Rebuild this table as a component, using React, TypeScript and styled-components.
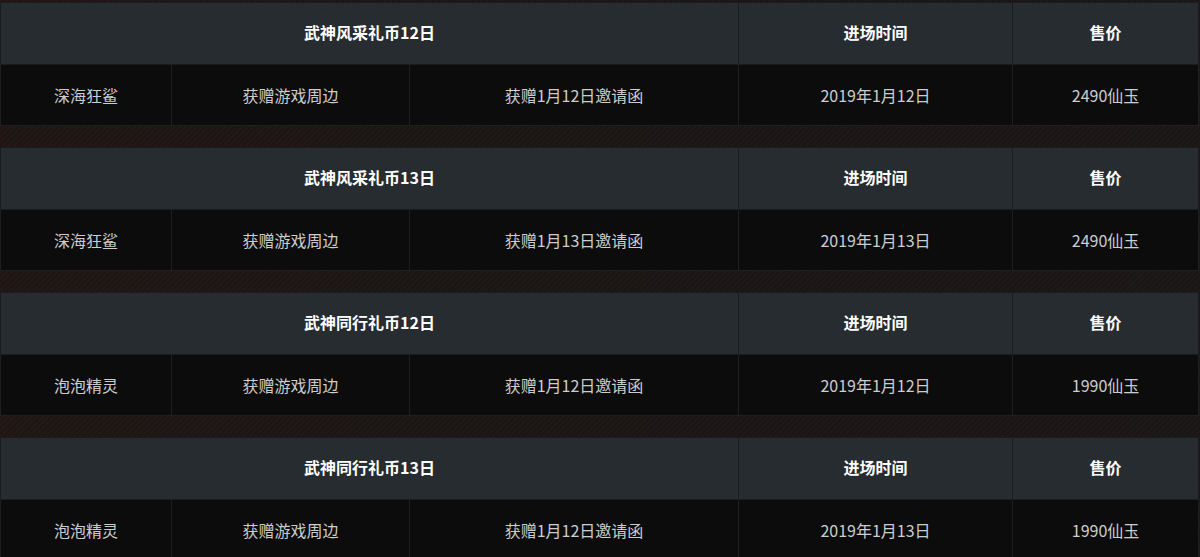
import React from "react";
import styled, { createGlobalStyle } from "styled-components";

type Ticket = {
  title: string;
  pet: string;
  gift: string;
  invite: string;
  date: string;
  price: string;
};

const tickets: Ticket[] = [
  { title: "武神风采礼币12日", pet: "深海狂鲨", gift: "获赠游戏周边", invite: "获赠1月12日邀请函", date: "2019年1月12日", price: "2490仙玉" },
  { title: "武神风采礼币13日", pet: "深海狂鲨", gift: "获赠游戏周边", invite: "获赠1月13日邀请函", date: "2019年1月13日", price: "2490仙玉" },
  { title: "武神同行礼币12日", pet: "泡泡精灵", gift: "获赠游戏周边", invite: "获赠1月12日邀请函", date: "2019年1月12日", price: "1990仙玉" },
  { title: "武神同行礼币13日", pet: "泡泡精灵", gift: "获赠游戏周边", invite: "获赠1月12日邀请函", date: "2019年1月13日", price: "1990仙玉" },
];

const GlobalStyle = createGlobalStyle`
  html, body {
    margin: 0;
    height: 100%;
  }
  body {
    font-family: "Noto Sans CJK SC", "Noto Sans", sans-serif;
    background-color: #1b1615;
    background-image:
      repeating-linear-gradient(135deg, rgba(255,255,255,0.01) 0 2px, rgba(0,0,0,0.03) 2px 4px),
      linear-gradient(90deg, #201714 0%, #1c1615 30%, #1b1716 100%);
    overflow: hidden;
  }
`;

const Page = styled.div`
  display: flex;
  flex-direction: column;
  gap: 21px;
  padding-top: 2px;
  width: 1198px;
`;

const Table = styled.table`
  width: 1198px;
  border-collapse: collapse;
  table-layout: fixed;
  border: 1px solid #1e1f21;
`;

const HeadCell = styled.th`
  height: 57px;
  padding: 0 0 4px;
  background: #272c31;
  color: #ffffff;
  font-size: 16px;
  font-weight: 700;
  text-align: center;
  border: 1px solid #1a1c1e;
`;

const Cell = styled.td`
  height: 60px;
  padding: 0;
  background: #0c0c0c;
  color: #cdcdcd;
  font-size: 16px;
  text-align: center;
  border: 1px solid #1f1f1f;
`;

const TicketTable = ({ t }: { t: Ticket }) => (
  <Table>
    <colgroup>
      <col style={{ width: 171 }} />
      <col style={{ width: 238 }} />
      <col style={{ width: 329 }} />
      <col style={{ width: 274 }} />
      <col style={{ width: 186 }} />
    </colgroup>
    <thead>
      <tr>
        <HeadCell colSpan={3}>{t.title}</HeadCell>
        <HeadCell>进场时间</HeadCell>
        <HeadCell>售价</HeadCell>
      </tr>
    </thead>
    <tbody>
      <tr>
        <Cell>{t.pet}</Cell>
        <Cell>{t.gift}</Cell>
        <Cell>{t.invite}</Cell>
        <Cell>{t.date}</Cell>
        <Cell>{t.price}</Cell>
      </tr>
    </tbody>
  </Table>
);

export default function App() {
  return (
    <>
      <GlobalStyle />
      <Page>
        {tickets.map((t) => (
          <TicketTable key={t.title} t={t} />
        ))}
      </Page>
    </>
  );
}
